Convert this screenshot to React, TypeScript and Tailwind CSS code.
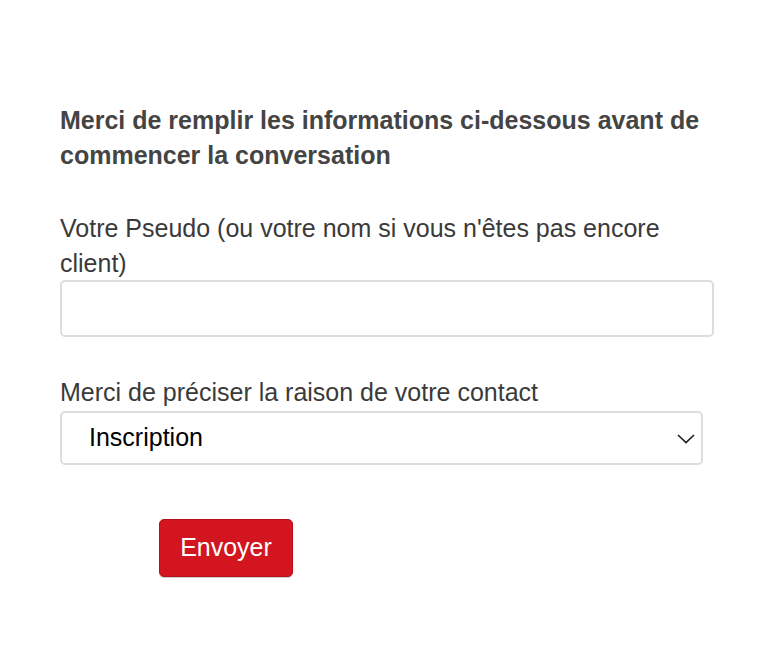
export default function App() {
  return (
    <div className="min-h-[657px] w-[768px] bg-white font-['Liberation_Sans',Arial,sans-serif] text-[#444]">
      <div className="px-[60px] pt-[103px]">
        <h2 className="text-[25px] font-bold leading-[35px] w-[654px]">
          Merci de remplir les informations ci-dessous avant de commencer la conversation
        </h2>
        <div className="mt-[38px]">
          <label className="block text-[25px] leading-[35px] w-[654px] text-[#3a3a3a]">
            Votre Pseudo (ou votre nom si vous n'êtes pas encore client)
          </label>
          <input
            type="text"
            className="-mt-px block w-[654px] h-[57px] rounded-[5px] border-2 border-[#ddd] bg-white outline-none"
          />
        </div>
        <div className="mt-[38px]">
          <label className="block text-[25px] leading-[35px] text-[#3a3a3a]">
            Merci de préciser la raison de votre contact
          </label>
          <div className="relative w-[643px]">
            <select className="mt-[1px] block w-full h-[54px] appearance-none rounded-[5px] border-2 border-[#ddd] bg-white pl-[27px] text-[25px] text-black outline-none">
              <option>Inscription</option>
            </select>
            <svg
              className="pointer-events-none absolute right-[8px] top-[19px] h-[18px] w-[18px]"
              viewBox="0 0 18 18"
              fill="none"
              stroke="#222"
              strokeWidth="1.7"
            >
              <path d="M1 5 L9 12.5 L17 5" />
            </svg>
          </div>
        </div>
        <div className="mt-[54px] pl-[99px]">
          <button className="h-[58px] w-[134px] rounded-[5px] border border-[#b8101a] bg-[#d2151e] text-[25px] text-white shadow-[0_1px_1px_rgba(0,0,0,0.2)]">
            Envoyer
          </button>
        </div>
      </div>
    </div>
  );
}
